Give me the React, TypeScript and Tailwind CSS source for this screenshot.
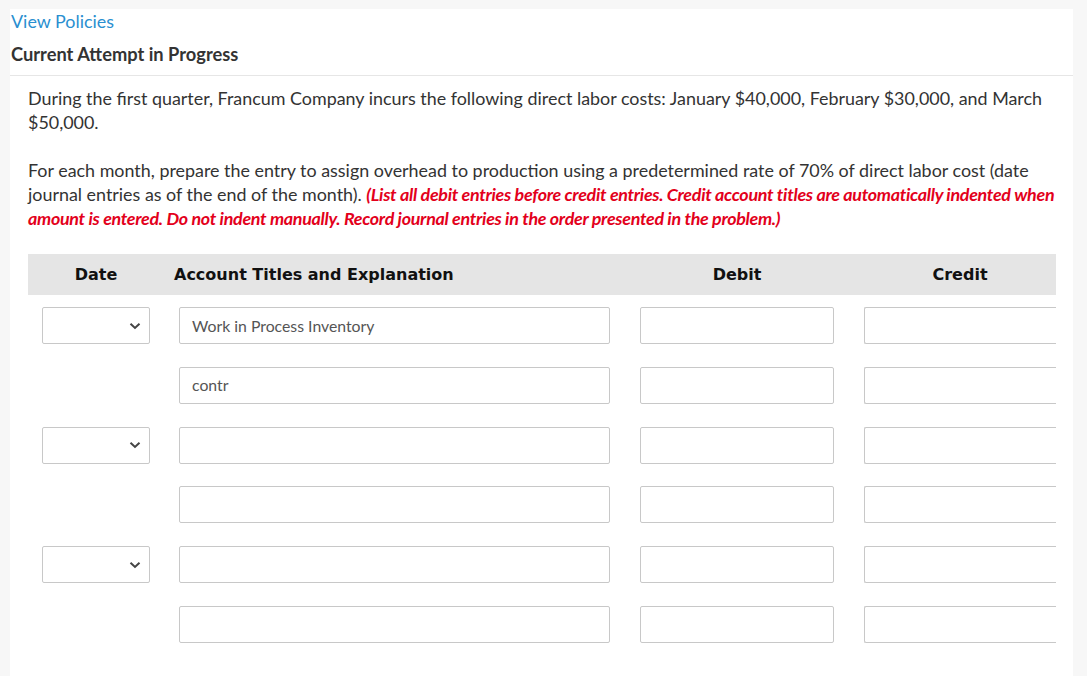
import React from "react";

function Chevron() {
  return (
    <svg width="12" height="8" viewBox="0 0 12 8" className="absolute right-[8px] top-1/2 -translate-y-1/2">
      <path d="M1.5 1.8 L6 6 L10.5 1.8" fill="none" stroke="#444" strokeWidth="2" />
    </svg>
  );
}

function Box({ className = "", text = "" }: { className?: string; text?: string }) {
  return (
    <div className={`h-[37px] border border-[#c8c8c8] rounded-[2px] bg-white flex items-center px-3 text-[15.8px] text-[#555] ${className}`}>
      {text}
    </div>
  );
}

function Row({ date, text }: { date: boolean; text?: string }) {
  return (
    <div className="grid grid-cols-[136px_461px_224px_222px] h-[59.8px]">
      <div className="px-[14px]">
        {date && (
          <div className="relative h-[37px] border border-[#c8c8c8] rounded-[2px] bg-white">
            <Chevron />
          </div>
        )}
      </div>
      <div className="px-[15px]">
        <Box text={text} />
      </div>
      <div className="px-[15px]">
        <Box />
      </div>
      <div className="pl-[15px]">
        <Box className="border-r-0" />
      </div>
    </div>
  );
}

export default function App() {
  return (
    <div className="min-h-[676px] bg-[#f7f7f7] pt-[9px] pl-[10px] pr-[14px] font-['Lato','Noto_Sans',sans-serif]">
      <div className="bg-white min-h-[700px]">
        <div className="pl-[1px] pt-[1px] text-[17.9px] text-[#2a8fd0] leading-[22px]">View Policies</div>
        <div className="pl-[1px] pt-[11px] pb-[10px] text-[18.3px] font-bold text-[#333] leading-[22px] border-b border-[#e6e6e6]">
          Current Attempt in Progress
        </div>
        <div className="pl-[18px] pr-[2px] pt-[10px] text-[17.9px] leading-[24px] text-[#333]">
          <p className="pr-[12px]">
            During the first quarter, Francum Company incurs the following direct labor costs: January $40,000, February $30,000, and March $50,000.
          </p>
          <p className="mt-[24px]">
            For each month, prepare the entry to assign overhead to production using a predetermined rate of 70% of direct labor cost (date journal entries as of the end of the month).{" "}
            <span className="text-[#e3001b] font-bold italic tracking-[-0.3px]">
              (List all debit entries before credit entries. Credit account titles are automatically indented when amount is entered. Do not indent manually. Record journal entries in the order presented in the problem.)
            </span>
          </p>
        </div>
        <div className="ml-[18px] mr-[17px] mt-[24px] overflow-hidden">
          <div className="w-[1043px]">
            <div className="grid grid-cols-[136px_461px_224px_222px] h-[41px] bg-[#e5e5e5] items-center font-['DejaVu_Sans',sans-serif] font-bold text-[16px] text-[#111]">
              <div className="text-center">Date</div>
              <div className="pl-[10px]">Account Titles and Explanation</div>
              <div className="text-center">Debit</div>
              <div className="text-center">Credit</div>
            </div>
            <div className="pt-[12px]">
              <Row date text="Work in Process Inventory" />
              <Row date={false} text="contr" />
              <Row date />
              <Row date={false} />
              <Row date />
              <Row date={false} />
            </div>
          </div>
        </div>
      </div>
    </div>
  );
}
